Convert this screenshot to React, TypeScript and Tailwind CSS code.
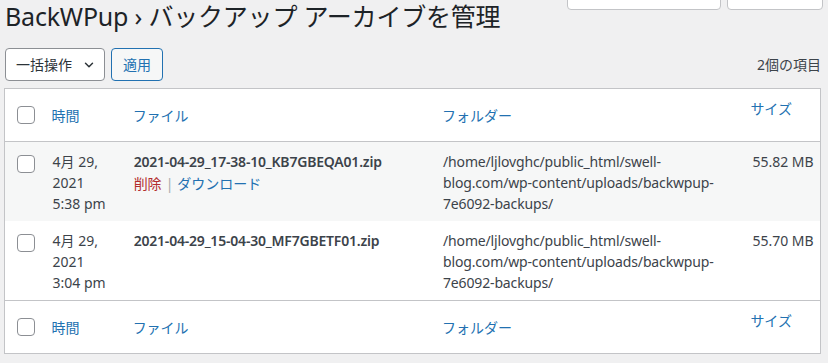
import { ChevronDown } from "lucide-react";

const font = { fontFamily: '"Noto Sans", "Noto Sans CJK JP", sans-serif' };

interface Backup {
  date: string;
  year: string;
  time: string;
  file: string;
  size: string;
  actions: boolean;
}

const backups: Backup[] = [
  {
    date: "4月 29,",
    year: "2021",
    time: "5:38 pm",
    file: "2021-04-29_17-38-10_KB7GBEQA01.zip",
    size: "55.82 MB",
    actions: true,
  },
  {
    date: "4月 29,",
    year: "2021",
    time: "3:04 pm",
    file: "2021-04-29_15-04-30_MF7GBETF01.zip",
    size: "55.70 MB",
    actions: false,
  },
];

function Check() {
  return (
    <span className="block h-[18px] w-[18px] rounded-[4px] border border-[#8c8f94] bg-white" />
  );
}

function HeadRow({ top }: { top: boolean }) {
  const border = top ? "border-b" : "border-t";
  return (
    <tr className={`h-[53px] border-[#c3c4c7] ${border}`}>
      <td className="pl-[12px] align-middle">
        <Check />
      </td>
      <td className="pl-[10px] align-middle text-[#2271b1]">時間</td>
      <td className="pl-[10px] align-middle text-[#2271b1]">ファイル</td>
      <td className="pl-[10px] align-middle text-[#2271b1]">フォルダー</td>
      <td className="pb-[14px] pl-[10px] align-middle text-[#2271b1]">サイズ</td>
    </tr>
  );
}

export default function App() {
  return (
    <div
      className="min-h-[363px] bg-[#f0f0f1] pl-[4px] pr-[7px] text-[14px] leading-[21px] text-[#3c434a]"
      style={font}
    >
      <div className="flex items-start justify-between">
        <h1 className="pl-[1px] text-[25px] font-normal leading-[32px] tracking-[-0.2px] text-[#1d2327]">
          BackWPup › バックアップ アーカイブを管理
        </h1>
        <div className="flex gap-[6px]">
          <div className="-mt-px h-[11px] w-[154px] rounded-b-[4px] border border-[#c3c4c7] bg-white" />
          <div className="-mr-[2px] -mt-px h-[11px] w-[96px] rounded-b-[4px] border border-[#c3c4c7] bg-white" />
        </div>
      </div>

      <div className="mt-[16px] flex items-center">
        <div className="ml-px flex h-[33px] w-[100px] items-center justify-between rounded-[4px] border border-[#8c8f94] bg-white pl-[10px] pr-[8px] text-[#2c3338]">
          <span>一括操作</span>
          <ChevronDown className="h-[14px] w-[14px]" strokeWidth={2.5} />
        </div>
        <button
          type="button"
          className="ml-[6px] h-[33px] w-[52px] rounded-[4px] border border-[#2271b1] bg-[#f6f7f7] text-[14px] text-[#2271b1]"
        >
          適用
        </button>
        <span className="ml-auto text-[14px]">2個の項目</span>
      </div>

      <table className="mt-[7px] w-[817px] table-fixed border-collapse border border-[#c3c4c7] bg-white">
        <colgroup>
          <col className="w-[37px]" />
          <col className="w-[81px]" />
          <col className="w-[309px]" />
          <col className="w-[308px]" />
          <col className="w-[80px]" />
        </colgroup>
        <thead>
          <HeadRow top />
        </thead>
        <tbody>
          {backups.map((b, i) => (
            <tr
              key={b.file}
              className={i === 0 ? "h-[79px] bg-[#f6f7f7]" : "h-[80px] bg-white"}
            >
              <td className="pl-[12px] pt-[13px] align-top">
                <Check />
              </td>
              <td className="whitespace-nowrap pl-[11px] pt-[9px] align-top">
                {b.date}
                <br />
                {b.year}
                <br />
                {b.time}
              </td>
              <td className="pl-[11px] pt-[9px] align-top">
                <div className="font-semibold tracking-[-0.2px]">{b.file}</div>
                {b.actions && (
                  <div className="mt-px flex items-center">
                    <span className="text-[#b32d2e]">削除</span>
                    <span className="mx-[4px] text-[#a7aaad]">|</span>
                    <span className="text-[#2271b1]">ダウンロード</span>
                  </div>
                )}
              </td>
              <td className="whitespace-nowrap pl-[11px] pt-[9px] align-top tracking-[-0.15px]">
                /home/ljlovghc/public_html/swell-
                <br />
                blog.com/wp-content/uploads/backwpup-
                <br />
                7e6092-backups/
              </td>
              <td className="whitespace-nowrap pl-[12px] pt-[9px] align-top">{b.size}</td>
            </tr>
          ))}
        </tbody>
        <tfoot>
          <HeadRow top={false} />
        </tfoot>
      </table>
    </div>
  );
}
